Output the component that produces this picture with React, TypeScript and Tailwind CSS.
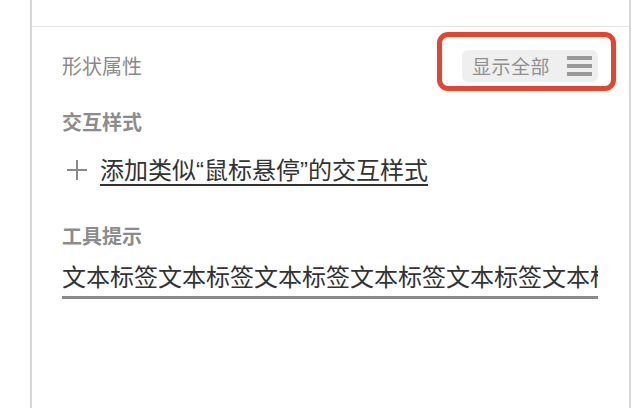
import React from "react";

const font = { fontFamily: '"Noto Sans CJK SC", "Noto Sans", sans-serif' };

export default function App() {
  return (
    <div
      className="w-[634px] h-[408px] bg-white flex overflow-hidden"
      style={font}
    >
      <div className="w-[30px] shrink-0" />
      <div className="w-[601px] shrink-0 border-l-2 border-r-2 border-[#d6d6d6] flex flex-col">
        <div className="h-[27px] border-b border-[#e3e3e3] shrink-0" />
        <div className="pl-[30px] pr-[31px] flex flex-col">
          <div className="mt-[23px] h-[32px] flex items-center justify-between">
            <span className="text-[20px] leading-[28px] text-[#8a8a8a]">形状属性</span>
            <div className="relative">
              <div className="absolute left-[-25px] right-[-18px] top-[-18px] bottom-[-9px] border-[5px] border-[#e8432d] rounded-[11px]" />
              <div className="w-[136px] h-[32px] bg-[#efefef] rounded-[6px] flex items-center pl-[10px] pr-[4px]">
                <span className="text-[19px] leading-[28px] text-[#8f8f8f] tracking-[0.5px]">显示全部</span>
                <div className="ml-auto mr-[2px] flex flex-col gap-[4px]">
                  <div className="w-[25px] h-[4px] bg-[#9a9a9a]" />
                  <div className="w-[25px] h-[4px] bg-[#9a9a9a]" />
                  <div className="w-[25px] h-[4px] bg-[#9a9a9a]" />
                </div>
              </div>
            </div>
          </div>
          <div className="mt-[26px] text-[20px] leading-[28px] font-bold text-[#8c8c8c]">交互样式</div>
          <div className="mt-[18px] h-[32px] flex items-center">
            <svg width="22" height="22" viewBox="0 0 22 22" className="ml-[4px] mr-[12px]">
              <path d="M11 1v20M1 11h20" stroke="#8a8a8a" strokeWidth="2" fill="none" />
            </svg>
            <span className="text-[24px] leading-[32px] text-[#333] underline decoration-2 underline-offset-[5px]">
              添加类似<span style={{ fontFamily: '"Liberation Sans", sans-serif' }}>“</span>鼠标悬停<span style={{ fontFamily: '"Liberation Sans", sans-serif' }}>”</span>的交互样式
            </span>
          </div>
          <div className="mt-[36px] text-[20px] leading-[28px] font-bold text-[#8c8c8c]">工具提示</div>
          <div className="mt-[8px] h-[41px] overflow-hidden whitespace-nowrap border-b-[3px] border-[#8a8a8a] text-[24px] leading-[36px] text-[#333]">
            文本标签文本标签文本标签文本标签文本标签文本标签
          </div>
        </div>
      </div>
    </div>
  );
}
